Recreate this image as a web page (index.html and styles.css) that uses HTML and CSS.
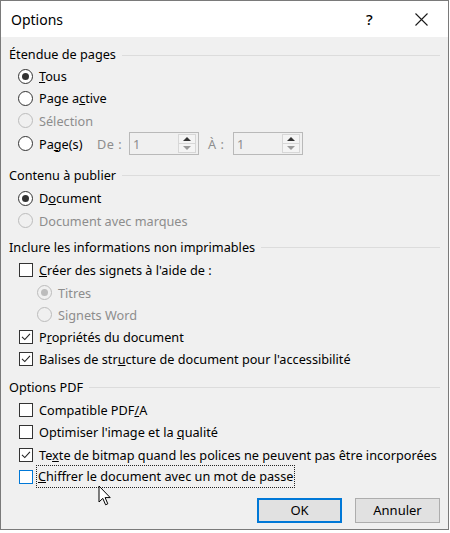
FILE: index.html
```html
<!DOCTYPE html>
<html lang="fr">
<head>
<meta charset="utf-8">
<title>Options</title>
<link rel="stylesheet" href="styles.css">
</head>
<body>
<div class="window">
  <div class="titlebar">
    <span class="title">Options</span>
    <span class="help">?</span>
    <span class="close">
      <svg width="13" height="13" viewBox="0 0 13 13"><path d="M0.5 0.5 L12.5 12.5 M12.5 0.5 L0.5 12.5" stroke="#1a1a1a" stroke-width="1.1" fill="none"/></svg>
    </span>
  </div>
  <div class="content">
    <section class="group g-first">
      <div class="group-head"><span>Étendue de pages</span></div>
      <div class="opt"><span class="radio checked"></span><span><u>T</u>ous</span></div>
      <div class="opt"><span class="radio"></span><span>Page a<u>c</u>tive</span></div>
      <div class="opt disabled"><span class="radio"></span><span>Sélection</span></div>
      <div class="opt pages">
        <span class="radio"></span><span class="pages-label">Pa<u>g</u>e(s)</span>
        <span class="field-label">De :</span>
        <span class="spin"><span class="spin-val">1</span><span class="spin-btns"><span class="up"></span><span class="down"></span></span></span>
        <span class="field-label a-label">À :</span>
        <span class="spin"><span class="spin-val">1</span><span class="spin-btns"><span class="up"></span><span class="down"></span></span></span>
      </div>
    </section>
    <section class="group g-second">
      <div class="group-head"><span>Contenu à publier</span></div>
      <div class="opt"><span class="radio checked"></span><span>D<u>o</u>cument</span></div>
      <div class="opt disabled"><span class="radio"></span><span>Document avec marques</span></div>
    </section>
    <section class="group g-third">
      <div class="group-head"><span>Inclure les informations non imprimables</span></div>
      <div class="opt"><span class="check"></span><span><u>C</u>réer des signets à l'aide de :</span></div>
      <div class="opt sub disabled"><span class="radio checked"></span><span>Titres</span></div>
      <div class="opt sub disabled"><span class="radio"></span><span>Signets Word</span></div>
      <div class="opt"><span class="check checked"><svg viewBox="0 0 14 14"><path d="M2.3 6.8 L5.6 10 L11.6 3.4" stroke="#222" stroke-width="1.3" fill="none"/></svg></span><span>P<u>r</u>opriétés du document</span></div>
      <div class="opt"><span class="check checked"><svg viewBox="0 0 14 14"><path d="M2.3 6.8 L5.6 10 L11.6 3.4" stroke="#222" stroke-width="1.3" fill="none"/></svg></span><span>Balises de str<u>u</u>cture de document pour l'accessibilité</span></div>
    </section>
    <section class="group g-fourth">
      <div class="group-head"><span>Options PDF</span></div>
      <div class="opt"><span class="check"></span><span>Compatible PDF<u>/</u>A</span></div>
      <div class="opt"><span class="check"></span><span>Optimiser l'image et la <u>q</u>ualité</span></div>
      <div class="opt"><span class="check checked"><svg viewBox="0 0 14 14"><path d="M2.3 6.8 L5.6 10 L11.6 3.4" stroke="#222" stroke-width="1.3" fill="none"/></svg></span><span>Te<u>x</u>te de bitmap quand les polices ne peuvent pas être incorporées</span></div>
      <div class="opt"><span class="check hover"></span><span class="focus"><u>C</u>hiffrer le document avec un mot de passe</span></div>
    </section>
    <div class="buttons">
      <button class="btn default">OK</button>
      <button class="btn">Annuler</button>
    </div>
    <svg class="cursor" width="14" height="22" viewBox="0 0 14 22"><path d="M1 1 L1 17 L4.8 13.4 L7.6 19.8 L9.8 18.8 L7.1 12.6 L12.2 12.6 Z" fill="#fff" stroke="#000" stroke-width="1" stroke-linejoin="miter"/></svg>
  </div>
</div>
</body>
</html>
```
FILE: styles.css
```css
* { box-sizing: border-box; }
html, body { margin: 0; padding: 0; background: #fff; }
body {
  font-family: "Noto Sans", "Open Sans", "DejaVu Sans", sans-serif;
  font-size: 12.7px;
  color: #000;
}
.window {
  width: 449px;
  height: 530px;
  border: 1px solid #7a7a7a;
  background: #f0f0f0;
  display: flex;
  flex-direction: column;
}
.titlebar {
  height: 36px;
  flex: none;
  background: #fff;
  display: flex;
  align-items: center;
  padding: 0 0 0 10px;
}
.title { font-size: 14px; flex: 1; }
.help { font-size: 15px; width: 9px; margin-right: 40px; font-weight: 500; }
.close { width: 13px; height: 13px; margin-right: 20px; display: flex; }
.content {
  position: relative;
  flex: 1;
  padding: 6px 8px 0 8px;
  display: flex;
  flex-direction: column;
}
.group { display: flex; flex-direction: column; }
.g-second { margin-top: 8px; }
.g-third { margin-top: 4px; }
.g-fourth { margin-top: 5px; }
.group-head {
  height: 22px;
  flex: none;
  display: flex;
  align-items: center;
  gap: 6px;
  margin-bottom: 1.5px;
}
.g-first .group-head { margin-bottom: 0; }
.group-head::after {
  content: "";
  flex: 1;
  height: 1px;
  background: #dcdcdc;
  margin-top: 2px;
}
.opt {
  height: 22.25px;
  flex: none;
  display: flex;
  align-items: center;
  padding-left: 9px;
  gap: 6px;
  white-space: nowrap;
}
.opt.sub { padding-left: 28px; }
.opt.disabled { color: #8d8d8d; }
.radio {
  width: 15px;
  height: 15px;
  border: 1px solid #333;
  border-radius: 50%;
  background: #fff;
  display: flex;
  align-items: center;
  justify-content: center;
  flex: none;
}
.radio.checked::after {
  content: "";
  width: 7px;
  height: 7px;
  border-radius: 50%;
  background: #333;
}
.disabled .radio { border-color: #bcbcbc; background: #f0f0f0; }
.disabled .radio.checked::after { background: #bcbcbc; }
.check {
  width: 14px;
  height: 14px;
  border: 1px solid #333;
  background: #fff;
  margin-left: 1px;
  flex: none;
  display: flex;
}
.check svg { width: 12px; height: 12px; }
.check.hover { border-color: #0078d7; }
.focus {
  outline: 1px dotted #222;
  outline-offset: 0;
  padding: 0 1px 1px 1px;
  margin-left: -2px;
  line-height: 20px;
}
.pages { height: 24px; }
.pages-label { width: 52px; }
.field-label { color: #8d8d8d; width: 26px; letter-spacing: 0.5px; }
.a-label { width: 19px; margin-left: 3px; }
.spin {
  width: 70px;
  height: 23px;
  border: 1px solid #b9b9b9;
  background: #f0f0f0;
  display: flex;
  align-items: center;
  justify-content: space-between;
  padding: 1px 2px 1px 3px;
}
.spin-val { color: #8d8d8d; }
.spin-btns {
  width: 18px;
  height: 19px;
  display: flex;
  flex-direction: column;
  border: 1px solid #d7d7d7;
}
.spin-btns span {
  flex: 1;
  display: flex;
  align-items: center;
  justify-content: center;
  background: #f4f4f4;
}
.spin-btns .up { border-bottom: 1px solid #d7d7d7; }
.spin-btns .up::after {
  content: "";
  border-left: 4px solid transparent;
  border-right: 4px solid transparent;
  border-bottom: 4px solid #333;
}
.spin-btns .down::after {
  content: "";
  border-left: 4px solid transparent;
  border-right: 4px solid transparent;
  border-top: 4px solid #9a9a9a;
}
.buttons {
  display: flex;
  justify-content: flex-end;
  gap: 13px;
  margin-top: 9.5px;
}
.btn {
  width: 85px;
  height: 25px;
  font-family: inherit;
  font-size: 13px;
  color: #000;
  background: #e1e1e1;
  border: 1px solid #adadad;
  padding: 0;
}
.btn.default { border: 2px solid #0078d7; }
.cursor {
  position: absolute;
  left: 97px;
  top: 448px;
}
```
